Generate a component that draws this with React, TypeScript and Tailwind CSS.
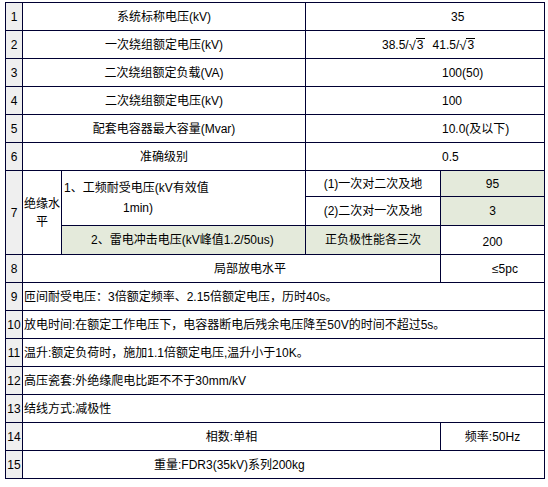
import React from "react";

const B = "border border-[#000033]";
const NUM = `${B} bg-[#efefef] text-center p-0`;
const G = "bg-[#e4eadb]";

function Sqrt3() {
  return (
    <span className="inline-flex items-end">
      <span className="text-[13px] leading-none">√</span>
      <span className="border-t border-black leading-[13px] px-[1px]">3</span>
    </span>
  );
}

export default function App() {
  const simple: [string, string, React.ReactNode, string?][] = [
    ["1", "系统标称电压(kV)", "35", "pl-[145px]"],
    ["2", "一次绕组额定电压(kV)", "", "pl-[76px]"],
    ["3", "二次绕组额定负载(VA)", "100(50)"],
    ["4", "二次绕组额定电压(kV)", "100"],
    ["5", "配套电容器最大容量(Mvar)", "10.0(及以下)"],
    ["6", "准确级别", "0.5"],
  ];
  const full: [string, string][] = [
    ["9", "匝间耐受电压：3倍额定频率、2.15倍额定电压，历时40s。"],
    ["10", "放电时间:在额定工作电压下，电容器断电后残余电压降至50V的时间不超过5s。"],
    ["11", "温升:额定负荷时，施加1.1倍额定电压,温升小于10K。"],
    ["12", "高压瓷套:外绝缘爬电比距不不于30mm/kV"],
    ["13", "结线方式:减极性"],
  ];
  return (
    <div
      className="w-[548px] h-[487px] bg-white text-black text-[12px] leading-[14px]"
      style={{ fontFamily: '"Liberation Sans", "Noto Sans CJK SC", sans-serif' }}
    >
      <div className="pt-[2px] pl-[5px]">
        <table className="table-fixed border-collapse w-[539px]">
          <colgroup>
            <col className="w-[17px]" />
            <col className="w-[39px]" />
            <col className="w-[244px]" />
            <col className="w-[135px]" />
            <col className="w-[104px]" />
          </colgroup>
          <tbody>
            {simple.map(([n, label, val, pad]) => (
              <tr key={n} className="h-[28px]">
                <td className={NUM}>{n}</td>
                <td colSpan={2} className={`${B} text-center p-0`}>{label}</td>
                <td colSpan={2} className={`${B} p-0 ${pad ?? "pl-[136px]"}`}>
                  {n === "2" ? (
                    <span className="inline-flex items-end gap-[0px]">
                      <span>38.5/</span>
                      <Sqrt3 />
                      <span className="ml-[8px]">41.5/</span>
                      <Sqrt3 />
                    </span>
                  ) : (
                    val
                  )}
                </td>
              </tr>
            ))}
            <tr className="h-[26px]">
              <td rowSpan={3} className={NUM}>7</td>
              <td rowSpan={3} className={`${B} text-center p-0 leading-[18px]`}>
                绝缘水
                <br />平
              </td>
              <td rowSpan={2} className={`${B} p-0 pl-[2px] leading-[20px]`}>
                <div>1、工频耐受电压(kV有效值</div>
                <div className="pl-[59px]">1min)</div>
              </td>
              <td className={`${B} text-center p-0`}>(1)一次对二次及地</td>
              <td className={`${B} ${G} text-center p-0`}>95</td>
            </tr>
            <tr className="h-[29px]">
              <td className={`${B} text-center p-0`}>(2)二次对一次及地</td>
              <td className={`${B} ${G} text-center p-0`}>3</td>
            </tr>
            <tr className="h-[29px]">
              <td className={`${B} ${G} p-0 pl-[29px]`}>2、雷电冲击电压(kV峰值1.2/50us)</td>
              <td className={`${B} ${G} text-center p-0`}>正负极性能各三次</td>
              <td className={`${B} text-center p-0 pt-[3px]`}>200</td>
            </tr>
            <tr className="h-[28px]">
              <td className={NUM}>8</td>
              <td colSpan={3} className={`${B} p-0 pl-[191px]`}>局部放电水平</td>
              <td className={`${B} p-0 pl-[51px]`}>≤5pc</td>
            </tr>
            {full.map(([n, t]) => (
              <tr key={n} className="h-[28px]">
                <td className={NUM}>{n}</td>
                <td colSpan={4} className={`${B} p-0 pl-[1px] whitespace-nowrap`}>{t}</td>
              </tr>
            ))}
            <tr className="h-[28px]">
              <td className={NUM}>14</td>
              <td colSpan={3} className={`${B} text-center p-0`}>相数:单相</td>
              <td className={`${B} text-center p-0`}>频率:50Hz</td>
            </tr>
            <tr className="h-[28px]">
              <td className={NUM}>15</td>
              <td colSpan={4} className={`${B} p-0 pl-[131px]`}>重量:FDR3(35kV)系列200kg</td>
            </tr>
          </tbody>
        </table>
      </div>
    </div>
  );
}
